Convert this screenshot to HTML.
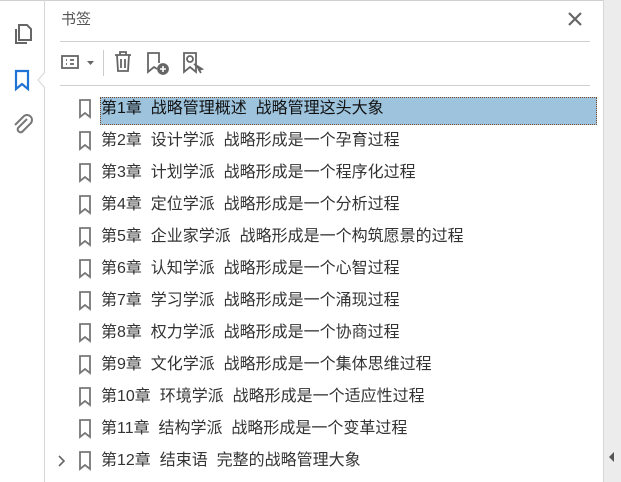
<!DOCTYPE html>
<html><head><meta charset="utf-8"><style>
*{margin:0;padding:0;box-sizing:border-box}
body{width:621px;height:482px;background:#fff;position:relative;overflow:hidden;font-family:"Liberation Sans","Noto Sans CJK SC",sans-serif}
.top{position:absolute;left:0;top:0;width:621px;height:1px;background:#d0d0d0}
.left{position:absolute;left:44px;top:0;width:1px;height:482px;background:#d6d6d6}
.right{position:absolute;left:603px;top:0;width:18px;height:482px;background:#ececec;border-left:1px solid #d6d6d6}
.hl{position:absolute;left:60px;width:530px;height:1px;background:#cfcfcf}
.t{position:absolute;font-size:16px;color:#333;white-space:nowrap;line-height:20px}
.bm{position:absolute;left:78px}
.sel{position:absolute;left:100px;top:97px;width:497px;height:28px;background:#9dc3dd;border:1px dotted #7a4a2a}
</style></head><body>
<div class="top"></div><div class="left"></div><div class="right"></div>
<svg style="position:absolute;left:605px;top:450px" width="12" height="14"><path d="M9 2 L4 7 L9 12Z" fill="#555"/></svg>
<svg style="position:absolute;left:12px;top:22px" width="22" height="24" fill="none" stroke="#666" stroke-width="2"><path d="M7 3h8l4 4v11H7z"/><path d="M4 7v14h11"/></svg>
<svg style="position:absolute;left:13px;top:68px" width="18" height="26" fill="none" stroke="#1e73d4" stroke-width="2.2"><path d="M3 3h12v18l-6-5-6 5z"/></svg>
<svg style="position:absolute;left:10px;top:112px" width="24" height="26" fill="none" stroke="#777" stroke-width="2"><path d="M17 7l-9 9a3 3 0 0 0 4 4l9-9a5 5 0 0 0-7-7l-9 9"/></svg>
<svg style="position:absolute;left:37px;top:72px" width="9" height="16"><path d="M8 0L1 8L8 16" fill="#fff" stroke="#d6d6d6"/></svg>
<div class="t" style="left:61px;top:10px;color:#555;font-size:15px">书签</div>
<svg style="position:absolute;left:567px;top:11px" width="16" height="16" stroke="#666" stroke-width="2.2"><path d="M2 2L14 14M14 2L2 14"/></svg>
<div class="hl" style="top:41px"></div>
<div class="hl" style="top:85px"></div>
<svg style="position:absolute;left:60px;top:53px" width="38" height="20" fill="none" stroke="#666" stroke-width="1.8"><rect x="2" y="3" width="16" height="12"/><path d="M6 7h1M10 7h4M6 11h1M10 11h4"/><path d="M27 8h7l-3.5 4z" fill="#666" stroke="none"/></svg>
<div style="position:absolute;left:103px;top:50px;width:1px;height:26px;background:#ccc"></div>
<svg style="position:absolute;left:112px;top:50px" width="22" height="24" fill="none" stroke="#666" stroke-width="1.8"><path d="M3 5h16M8 5V2h6v3M5 5l1 16h10l1-16M9 9v9M13 9v9"/></svg>
<svg style="position:absolute;left:145px;top:50px" width="26" height="26" fill="none" stroke="#666" stroke-width="1.8"><path d="M14 13V3H3v19l6-5 3 2"/><circle cx="18" cy="19" r="5" fill="#666"/><path d="M18 16v6M15 19h6" stroke="#fff" stroke-width="1.6"/></svg>
<svg style="position:absolute;left:181px;top:50px" width="26" height="26" fill="none" stroke="#666" stroke-width="1.8"><path d="M3 3h12v19l-6-5-6 5z"/><circle cx="9" cy="9" r="3"/><path d="M13 14l8 5-3 1 2 3" fill="#666"/></svg>
<div class="sel"></div>
<div id="rows"></div>
<svg style="position:absolute;left:57px;top:454px" width="10" height="14" fill="none" stroke="#666" stroke-width="1.6"><path d="M2 2l5 5-5 5"/></svg>
<script>
var items=["第1章  战略管理概述  战略管理这头大象","第2章  设计学派  战略形成是一个孕育过程","第3章  计划学派  战略形成是一个程序化过程","第4章  定位学派  战略形成是一个分析过程","第5章  企业家学派  战略形成是一个构筑愿景的过程","第6章  认知学派  战略形成是一个心智过程","第7章  学习学派  战略形成是一个涌现过程","第8章  权力学派  战略形成是一个协商过程","第9章  文化学派  战略形成是一个集体思维过程","第10章  环境学派  战略形成是一个适应性过程","第11章  结构学派  战略形成是一个变革过程","第12章  结束语  完整的战略管理大象"];
var h="";items.forEach(function(s,i){var y=108+32*i;
h+='<svg class="bm" style="top:'+(y-9)+'px" width="14" height="20" fill="none" stroke="#777" stroke-width="1.8"><path d="M2 1h10v17l-5-4-5 4z"/></svg>';
h+='<div class="t" style="left:101px;top:'+(y-9)+'px;color:'+(i==0?'#111':'#333')+'">'+s.replace(/ /g,'&nbsp;')+'</div>';});
document.getElementById("rows").innerHTML=h;
</script>
</body></html>
